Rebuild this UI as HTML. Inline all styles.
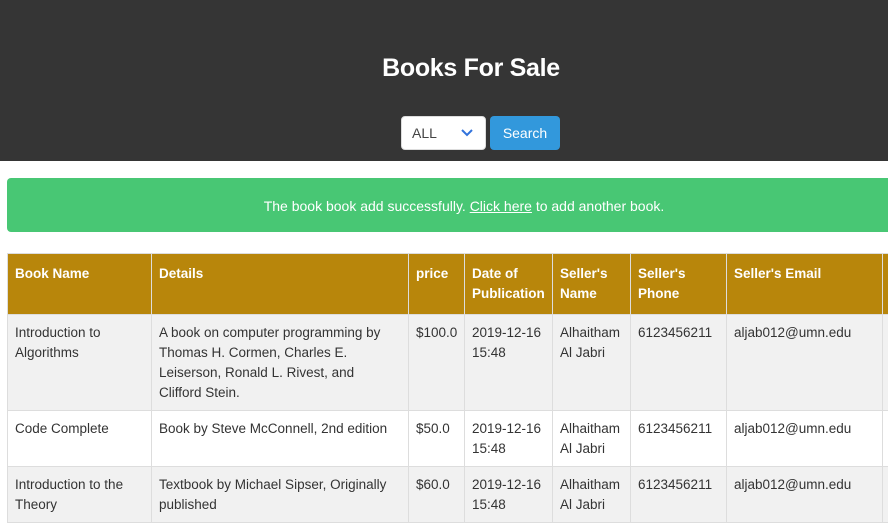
<!DOCTYPE html>
<html><head><meta charset="utf-8"><style>
*{box-sizing:border-box}
body{margin:0;width:888px;height:498px;overflow:hidden;font-family:"Liberation Sans",sans-serif;background:#fff;position:relative}
.hdr{position:absolute;left:0;top:0;width:888px;height:161px;background:#353535}
h1{position:absolute;left:0;width:942px;top:54px;margin:0;text-align:center;color:#fff;font-size:25px;font-weight:bold;letter-spacing:-0.3px}
.sel{position:absolute;left:401px;top:116px;width:85px;height:34px;background:#fff;border-radius:4px;border:1px solid #ddd;font-size:14px;color:#444;padding:8px 10px}
.sel svg{position:absolute;right:12px;top:12px}
.btn{position:absolute;left:490px;top:116px;width:70px;height:34px;background:#3298dc;border-radius:4px;color:#fff;font-size:14px;text-align:center;line-height:34px}
.alert{position:absolute;left:7px;top:178px;width:890px;height:54px;background:#48c774;border-radius:4px;color:#fff;font-size:14px;text-align:center;line-height:56px;padding-left:24px}
.alert u{color:#fff}
table{position:absolute;left:7px;top:253px;width:895px;border-collapse:collapse;table-layout:fixed;font-size:13.5px;line-height:20px;color:#333}
td,th{border:1px solid #ddd;padding:8px 7px 7px 7px;vertical-align:top;text-align:left;overflow:hidden}
th{background:#b8860b;color:#fff;font-weight:bold;height:61px;padding-top:10px}
tr.a td{background:#f1f1f1}
</style></head><body>
<div class="hdr"></div>
<h1>Books For Sale</h1>
<div class="sel">ALL<svg width="12" height="8" viewBox="0 0 12 8"><path d="M1 1l5 5 5-5" stroke="#3273dc" stroke-width="2" fill="none"/></svg></div>
<div class="btn">Search</div>
<div class="alert">The book book add successfully. <u>Click here</u> to add another book.</div>
<table>
<colgroup><col style="width:144px"><col style="width:257px"><col style="width:56px"><col style="width:88px"><col style="width:78px"><col style="width:96px"><col style="width:156px"><col style="width:20px"></colgroup>
<tr><th>Book Name</th><th>Details</th><th>price</th><th>Date of Publication</th><th>Seller's Name</th><th>Seller's Phone</th><th>Seller's Email</th><th></th></tr>
<tr class="a"><td>Introduction to Algorithms</td><td>A book on computer programming by Thomas H. Cormen, Charles E. Leiserson, Ronald L. Rivest, and<br>Clifford Stein.</td><td>$100.0</td><td>2019-12-16 15:48</td><td>Alhaitham Al Jabri</td><td>6123456211</td><td>aljab012@umn.edu</td><td></td></tr>
<tr><td>Code Complete</td><td>Book by Steve McConnell, 2nd edition</td><td>$50.0</td><td>2019-12-16 15:48</td><td>Alhaitham Al Jabri</td><td>6123456211</td><td>aljab012@umn.edu</td><td></td></tr>
<tr class="a"><td>Introduction to the Theory</td><td>Textbook by Michael Sipser, Originally published</td><td>$60.0</td><td>2019-12-16 15:48</td><td>Alhaitham Al Jabri</td><td>6123456211</td><td>aljab012@umn.edu</td><td></td></tr>
</table>
</body></html>
